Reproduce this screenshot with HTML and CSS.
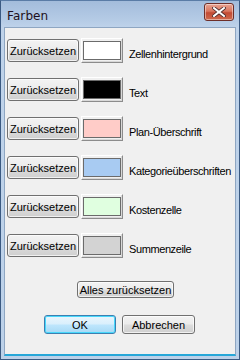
FILE: index.html
```html
<!DOCTYPE html>
<html>
<head>
<meta charset="utf-8">
<link rel="stylesheet" href="styles.css">
</head>
<body>
<div class="window">
  <div class="titlebar">
    <span class="title">Farben</span>
    <div class="close">
      <svg width="14" height="10" viewBox="0 0 14 10">
        <path d="M2 1 L12 9 M12 1 L2 9" stroke="#4a2a2a" stroke-width="3.6" stroke-linecap="square"/>
        <path d="M2 1 L12 9 M12 1 L2 9" stroke="#ffffff" stroke-width="2" stroke-linecap="square"/>
      </svg>
    </div>
  </div>
  <div class="client">
    <div class="rows">
      <div class="row"><button class="btn reset">Zurücksetzen</button><div class="swatch"><div class="fill" style="background:#ffffff"></div></div><span class="label">Zellenhintergrund</span></div>
      <div class="row"><button class="btn reset">Zurücksetzen</button><div class="swatch"><div class="fill" style="background:#000000"></div></div><span class="label">Text</span></div>
      <div class="row"><button class="btn reset">Zurücksetzen</button><div class="swatch"><div class="fill" style="background:#ffccc8"></div></div><span class="label">Plan-Überschrift</span></div>
      <div class="row"><button class="btn reset">Zurücksetzen</button><div class="swatch"><div class="fill" style="background:#a8cbf2"></div></div><span class="label">Kategorieüberschriften</span></div>
      <div class="row"><button class="btn reset">Zurücksetzen</button><div class="swatch"><div class="fill" style="background:#e0ffe0"></div></div><span class="label">Kostenzelle</span></div>
      <div class="row"><button class="btn reset">Zurücksetzen</button><div class="swatch"><div class="fill" style="background:#d3d3d3"></div></div><span class="label">Summenzeile</span></div>
    </div>
    <div class="allrow"><button class="btn all">Alles zurücksetzen</button></div>
    <div class="okrow"><button class="btn ok">OK</button><button class="btn cancel">Abbrechen</button></div>
  </div>
</div>
</body>
</html>
```
FILE: styles.css
```css
* { box-sizing: border-box; }
html, body { margin: 0; padding: 0; }
body { width: 240px; height: 360px; overflow: hidden; background: #fff; }
.window {
  width: 240px; height: 360px;
  display: flex; flex-direction: column;
  border: 1px solid #3b5a82;
  border-top-color: #5a7ca6;
  background: linear-gradient(to bottom, #a3bcdb 0px, #b6cce6 20px, #bfd3ea 27px, #bcd1e9 100%);
  font-family: "Liberation Sans", Arial, sans-serif;
  font-size: 11px;
  color: #000;
}
.titlebar {
  height: 26px; flex: none;
  display: flex; align-items: center; justify-content: space-between;
  padding: 0 5px 0 6px;
}
.title {
  font-family: "DejaVu Sans", "Liberation Sans", sans-serif;
  font-size: 12px; color: #1e1020; letter-spacing: 0.1px;
  margin-top: 3px;
}
.close {
  width: 30px; height: 18px; margin-top: -4px;
  border: 1px solid #6d2e28;
  border-radius: 3px;
  background: linear-gradient(to bottom, #e8a493 0%, #d9765f 45%, #c24a33 55%, #cf6a4e 100%);
  box-shadow: inset 0 0 0 1px rgba(255,255,255,0.45);
  display: flex; align-items: center; justify-content: center;
}
.client {
  flex: 1;
  margin: 0 3px 3px 3px;
  background: #f0f0f0;
  border: 1px solid #8ea6c2;
  border-bottom: 2px solid #27a7d8;
  display: flex; flex-direction: column;
  padding: 10px 0 0 2px;
  overflow: hidden;
}
.rows { display: flex; flex-direction: column; gap: 14px; }
.row { display: flex; align-items: center; height: 25px; }
.btn {
  flex: none;
  font-family: "Liberation Sans", Arial, sans-serif;
  font-size: 11px; color: #000;
  border: 1px solid #707070;
  border-radius: 3px;
  background: linear-gradient(to bottom, #f3f3f3 0%, #ebebeb 48%, #dddddd 52%, #cfcfcf 100%);
  box-shadow: inset 0 0 0 1px rgba(255,255,255,0.7);
  padding: 0;
  margin: 0;
  display: flex; align-items: center; justify-content: center;
}
.reset { width: 72px; height: 23px; }
.swatch {
  flex: none;
  width: 42px; height: 25px; margin-left: 2px;
  border: 1px solid;
  border-color: #ffffff #8c8c8c #8c8c8c #ffffff;
  background: #f0f0f0;
  padding: 2px 1px 2px 1px;
  box-shadow: inset -1px -1px 0 #d8d8d8;
}
.fill { width: 100%; height: 100%; border: 1px solid #6b6b6b; }
.label { flex: none; margin-left: 6px; padding-top: 6px; white-space: nowrap; letter-spacing: -0.4px; }
.allrow { display: flex; padding-left: 70px; margin-top: 23px; }
.all { width: 97px; height: 17px; }
.okrow { display: flex; gap: 6px; padding-left: 37px; margin-top: 17px; }
.ok {
  width: 72px; height: 19px;
  border-color: #3c7fb1;
  box-shadow: inset 0 0 0 1px #48d8fb;
  background: linear-gradient(to bottom, #eaf6fd 0%, #d9effc 48%, #bee6fd 52%, #a7d9f5 100%);
}
.cancel { width: 73px; height: 19px; }
```
